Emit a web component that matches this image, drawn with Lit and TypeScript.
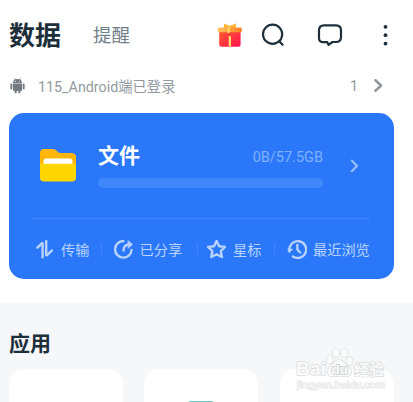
import { LitElement, html, css, svg } from "lit";
import { customElement } from "lit/decorators.js";

const transferIcon = svg`<path d="M1.4 8.7 6.6 3.6V18.2M10.2 2V16.8L15.8 11.6" stroke-width="2.4" stroke-linejoin="bevel"/>`;
const shareIcon = svg`<path d="M9.4 2A8.3 8.3 0 1 0 17.6 11M9.6 11.6C9.4 7.7 11.4 5.6 15.4 5.4" stroke-width="2.4"/><path d="M14.2 1.7 18.6 5.4 14.2 9.2z" fill="currentColor" stroke-width=".6"/>`;
const starIcon = svg`<path d="M10.6 2 13.2 7.2 19.1 7.9 14.8 12 15.9 18 10.6 15.2 5.3 18 6.4 12 2.1 7.9 8 7.2z" stroke-width="2.4"/>`;
const historyIcon = svg`<path d="M2.4 11.4A8.4 8.4 0 1 1 5.9 17.4M10.4 6V10.7L13.2 13.5" stroke-width="2.4"/><path d="M1 10 5.8 10.2 2.3 13.6z" fill="currentColor" stroke-width=".6"/>`;

@customElement("app-root")
export class AppRoot extends LitElement {
  static styles = css`
    :host {
      display: flex;
      flex-direction: column;
      width: 413px;
      height: 402px;
      overflow: hidden;
      background: #fff;
      color: #1d2f3b;
      font-family: Roboto, "Noto Sans CJK SC", sans-serif;
    }
    * { box-sizing: border-box; }
    svg { display: block; flex: none; fill: none; stroke: currentColor; stroke-linecap: round; stroke-linejoin: round; }
    span, h1, h2 { white-space: nowrap; margin: 0; }
    header { display: flex; align-items: center; height: 70px; flex: none; padding-left: 9px; }
    h1 { font-size: 26px; line-height: 30px; font-weight: 700; width: 84px; padding-top: 2px; }
    .remind { font-size: 18.5px; line-height: 24px; color: #72808a; width: 124px; padding-top: 1px; }
    .gift { margin-right: 18px; }
    .gift, .gift * { stroke: none; }
    .search { margin-right: 30px; }
    .chat { margin-right: 39px; }
    .device { display: flex; align-items: center; height: 31px; flex: none; padding: 0 29px 0 10px; color: #929a9f; font-size: 14.3px; }
    .device .name { margin-left: 13px; flex: 1; padding-bottom: 1px; }
    .device .count { margin-right: 16px; }
    .card { margin: 12px 19px 0 8.5px; height: 166px; flex: none; border-radius: 15px; background: #2a78f9; color: #fff; padding: 0 24px 0 24.5px; }
    .files { display: flex; height: 106px; border-bottom: 1px solid #4087fa; padding: 0 9px 0 6px; }
    .folder { margin-top: 35px; stroke: none; }
    .usage { width: 225px; margin: 29px 27px 0 22px; }
    .line { display: flex; justify-content: space-between; height: 36px; }
    .title { font-size: 21px; line-height: 26px; font-weight: 700; padding-top: 1px; }
    .quota { font-size: 14.5px; line-height: 20px; margin-top: 6px; color: #7fb0fc; }
    .bar { height: 10px; border-radius: 5px; background: #4088fa; }
    .go { margin-top: 45px; color: #95bdfc; }
    .actions { display: grid; grid-template-columns: 69px 83px 72px 1fr; height: 60px; margin-left: 3px; margin-right: -8px; color: #b9d3fd; column-gap: 9px; }
    .action { display: flex; align-items: center; font-size: 14.2px; position: relative; }
    .action + .action::before { content: ""; position: absolute; left: -13px; top: 24px; width: 1px; height: 13px; background: #4087fa; }
    .action:nth-child(3)::before { left: -9px; }
    .apps { margin-top: 24px; flex: 1; background: #f5f7f9; padding: 28px 19px 0 8.5px; position: relative; }
    h2 { font-size: 21px; line-height: 26px; font-weight: 700; padding-left: .5px; }
    .tiles { display: grid; grid-template-columns: repeat(3, 114px); column-gap: 21.7px; margin-top: 12px; }
    .tile { height: 60px; border-radius: 15px; background: #fff; display: flex; justify-content: center; padding-top: 32px; }
    .tile i { width: 26px; height: 24px; border-radius: 3px; background: #61cbc6; }
    .watermark { position: absolute; left: 293px; top: 42px; stroke: none; font-family: "Liberation Sans", "Noto Sans CJK SC", sans-serif; }
    .watermark text, .watermark path, .watermark ellipse { fill: #fafbfb; stroke: #d9dcde; stroke-width: 1.4; paint-order: stroke; }
    .watermark .du { fill: #fafbfb; stroke: #cfd2d4; stroke-width: 1.8; }
  `;

  private action(icon: unknown, label: string, gap = 5) {
    return html`<div class="action" style="gap:${gap}px"><svg width="20" height="20" viewBox="0 0 20 20">${icon}</svg><span>${label}</span></div>`;
  }

  render() {
    return html`
      <header>
        <h1>数据</h1>
        <span class="remind">提醒</span>
        <svg class="gift" width="26" height="26" viewBox="0 0 26 26">
          <defs>
            <linearGradient id="box" x2="1" y2="1"><stop stop-color="#ff5b2e"/><stop offset="1" stop-color="#ff1050"/></linearGradient>
            <linearGradient id="lid" x2="1"><stop stop-color="#ffc35a"/><stop offset="1" stop-color="#fb7e22"/></linearGradient>
          </defs>
          <path d="M7 6V1.5L12.5 3.8 19 1.5V6z" fill="#ffb938"/>
          <path d="M2.2 9H23.6V22.5Q23.6 24.7 21.4 24.7H4.4Q2.2 24.7 2.2 22.5z" fill="url(#box)"/>
          <rect x=".8" y="5.5" width="24" height="4.8" rx="1.5" fill="url(#lid)"/>
          <path d="M10.5 5.5h2.3V11h-2.3zM11.7 14H14V24.7H11.7z" fill="#ffd66b"/>
        </svg>
        <svg class="search" width="26" height="26" viewBox="0 0 26 26" stroke-width="2.2"><circle cx="11.6" cy="12.3" r="9.6"/><path d="M18.2 19.2 21.6 22.8"/></svg>
        <svg class="chat" width="26" height="26" viewBox="0 0 26 26" stroke-width="2.2"><path d="M7 3.3H19Q24 3.3 24 8.3V15Q24 20 19 20H15.5L11.5 22.8 10.3 20.1H5.5Q2 19.8 2 16V8.3Q2 3.3 7 3.3z"/></svg>
        <svg width="6" height="26" viewBox="0 0 6 26"><g fill="#1d2f3b" stroke="none"><circle cx="3.5" cy="4.8" r="1.9"/><circle cx="3.5" cy="13.2" r="1.9"/><circle cx="3.5" cy="21.6" r="1.9"/></g></svg>
      </header>
      <div class="device">
        <svg width="15" height="16" viewBox="0 0 15 16"><g fill="#737b80" stroke="none"><path d="M3 5Q3.1 1 7.5 1T12 5zM3 5.6H12V12Q12 13 11 13H4Q3 13 3 12z"/><rect x=".4" y="5.5" width="1.9" height="6" rx=".95"/><rect x="12.7" y="5.5" width="1.9" height="6" rx=".95"/><path d="M4.7 12h2v3.2h-2zM8.4 12h2v3.2h-2z"/></g><path d="M4.3.5 5.3 2M10.7.5 9.7 2" stroke="#737b80" stroke-width=".7"/><path d="M5.4 3.4h.1M9.5 3.4h.1" stroke="#fff" stroke-width=".9"/></svg>
        <span class="name">115_Android端已登录</span>
        <span class="count">1</span>
        <svg width="10" height="14" viewBox="0 0 10 14" stroke-width="2.6" stroke-linecap="butt"><path d="M1.5 1.3 7 6.5 1.5 11.7"/></svg>
      </div>
      <section class="card">
        <div class="files">
          <svg class="folder" width="37" height="34" viewBox="0 0 37 34">
            <path d="M1 5Q1 1 5 1H14Q16 1 18 3L20.5 5H33Q37 5.5 37 9V24H1z" fill="#ffb60b"/>
            <path d="M4.5 16V13.5Q4.5 10.5 7.5 10.5H30.5Q33.5 10.5 33.5 13.5V16z" fill="#fff"/>
            <path d="M1 15.8H37V29.5Q37 33.5 33 33.5H5Q1 33.5 1 29.5z" fill="#ffd602"/>
          </svg>
          <div class="usage">
            <div class="line"><span class="title">文件</span><span class="quota">0B/57.5GB</span></div>
            <div class="bar"></div>
          </div>
          <svg class="go" width="10" height="15" viewBox="0 0 10 15" stroke-width="2.2"><path d="M1.8 2.6 7 7.9 1.8 13.2"/></svg>
        </div>
        <div class="actions">
          ${this.action(transferIcon, "传输")}
          ${this.action(shareIcon, "已分享", 5.5)}
          ${this.action(starIcon, "星标", 7)}
          ${this.action(historyIcon, "最近浏览", 6)}
        </div>
      </section>
      <section class="apps">
        <h2>应用</h2>
        <div class="tiles"><div class="tile"></div><div class="tile"><i></i></div><div class="tile"></div></div>
        <svg class="watermark" width="96" height="50" viewBox="0 0 96 50">
          <text x="3" y="30" font-size="18" font-weight="700" textLength="30" lengthAdjust="spacingAndGlyphs">Bai</text>
          <ellipse cx="36.7" cy="14.5" rx="2.9" ry="4.2"/><ellipse cx="43" cy="8" rx="3.2" ry="4.3"/><ellipse cx="51.3" cy="8.3" rx="3.2" ry="4.3"/><ellipse cx="56.5" cy="16" rx="2.9" ry="4"/>
          <path d="M35 28Q34 24 38 21Q42 15 46 15Q50 15 53 20Q59 24 58 28Q57 32 52 31H41Q36 32 35 28z"/>
          <text class="du" x="38.5" y="28.5" font-size="13.5" font-weight="700">du</text>
          <text x="61" y="29.5" font-size="15" font-weight="700" textLength="30">经验</text>
          <text x="4" y="43" font-size="9" textLength="88" lengthAdjust="spacingAndGlyphs" style="stroke-width:.9">jingyan.baidu.com</text>
        </svg>
      </section>
    `;
  }
}
